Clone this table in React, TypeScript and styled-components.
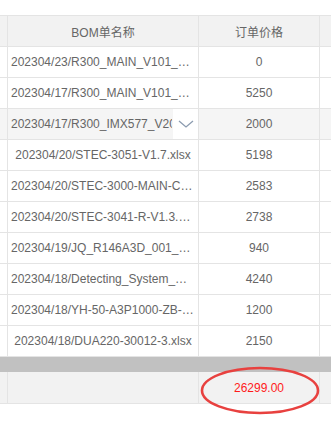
import styled, { createGlobalStyle } from 'styled-components';

const GlobalStyle = createGlobalStyle`
  html, body {
    margin: 0;
    padding: 0;
    background: #fff;
  }
  body {
    font-family: "Liberation Sans", Arial, "Noto Sans CJK SC", sans-serif;
    font-size: 12px;
    color: #666;
  }
`;

const COLS = '8px 191px 121px 1fr';

const Page = styled.div`
  width: 331px;
  height: 421px;
  overflow: hidden;
  padding-top: 15px;
  box-sizing: border-box;
`;

const Table = styled.div`
  position: relative;
  border-top: 1px solid #e4e4e4;
`;

const Row = styled.div<{ $head?: boolean; $hover?: boolean }>`
  display: grid;
  grid-template-columns: ${COLS};
  height: 31px;
  border-bottom: 1px solid #e4e4e4;
  background: ${(p) => (p.$head ? '#f2f2f2' : p.$hover ? '#f5f5f5' : '#fff')};
  box-sizing: border-box;
`;

const Cell = styled.div<{ $last?: boolean }>`
  position: relative;
  display: flex;
  align-items: center;
  justify-content: center;
  padding: 0 3px;
  border-right: ${(p) => (p.$last ? 'none' : '1px solid #e4e4e4')};
  min-width: 0;
  overflow: hidden;
  white-space: nowrap;
`;

const Edge = styled.div`
  border-right: 1px solid #e4e4e4;
`;

const Text = styled.span`
  display: block;
  overflow: hidden;
  text-overflow: ellipsis;
  white-space: nowrap;
  max-width: 100%;
`;

const Clipped = styled.span`
  display: block;
  white-space: nowrap;
  overflow: hidden;
  width: 161px;
  margin-right: auto;
`;

const SelectBox = styled.div`
  position: absolute;
  top: 0;
  right: 0;
  width: 25px;
  height: 100%;
  background: #fff;
  display: flex;
  align-items: center;
  justify-content: center;
`;

const Scrollbar = styled.div`
  height: 15px;
  background: #c1c1c1;
`;

const FootRow = styled(Row)`
  background: #f2f2f2;
  height: 32px;
`;

const Total = styled.span`
  color: #ff1a1a;
`;

const Ellipse = styled.svg`
  position: absolute;
  left: 199px;
  top: 350px;
  width: 122px;
  height: 49px;
  overflow: visible;
`;

const rows = [
  { name: '202304/23/R300_MAIN_V101_Bom.xlsx', price: '0' },
  { name: '202304/17/R300_MAIN_V101_Bom-2.xlsx', price: '5250' },
  { name: '202304/17/R300_IMX577_V20_Bom.xlsx', price: '2000', hover: true },
  { name: '202304/20/STEC-3051-V1.7.xlsx', price: '5198' },
  { name: '202304/20/STEC-3000-MAIN-C1.xlsx', price: '2583' },
  { name: '202304/20/STEC-3041-R-V1.3.xlsx', price: '2738' },
  { name: '202304/19/JQ_R146A3D_001_Bom.xlsx', price: '940' },
  { name: '202304/18/Detecting_System_Bom.xlsx', price: '4240' },
  { name: '202304/18/YH-50-A3P1000-ZB-01.xlsx', price: '1200' },
  { name: '202304/18/DUA220-30012-3.xlsx', price: '2150' },
];

export default function App() {
  return (
    <Page>
      <GlobalStyle />
      <Table>
        <Row $head>
          <Edge />
          <Cell>BOM单名称</Cell>
          <Cell>订单价格</Cell>
          <Cell $last />
        </Row>
        {rows.map((r) => (
          <Row key={r.name} $hover={r.hover}>
            <Edge />
            <Cell>
              {r.hover ? (
                <>
                  <Clipped>{r.name}</Clipped>
                  <SelectBox>
                    <svg width="16" height="10" viewBox="0 0 16 10">
                      <path d="M1 2 L8 8 L15 2" fill="none" stroke="#8c9cb0" strokeWidth="1.3" />
                    </svg>
                  </SelectBox>
                </>
              ) : (
                <Text>{r.name}</Text>
              )}
            </Cell>
            <Cell>{r.price}</Cell>
            <Cell $last />
          </Row>
        ))}
        <Scrollbar />
        <FootRow>
          <Edge />
          <Cell />
          <Cell>
            <Total>26299.00</Total>
          </Cell>
          <Cell $last />
        </FootRow>
        <Ellipse viewBox="0 0 122 49">
          <ellipse cx="61" cy="24.5" rx="58" ry="22.5" fill="none" stroke="#e8413f" strokeWidth="2.6" />
        </Ellipse>
      </Table>
    </Page>
  );
}
